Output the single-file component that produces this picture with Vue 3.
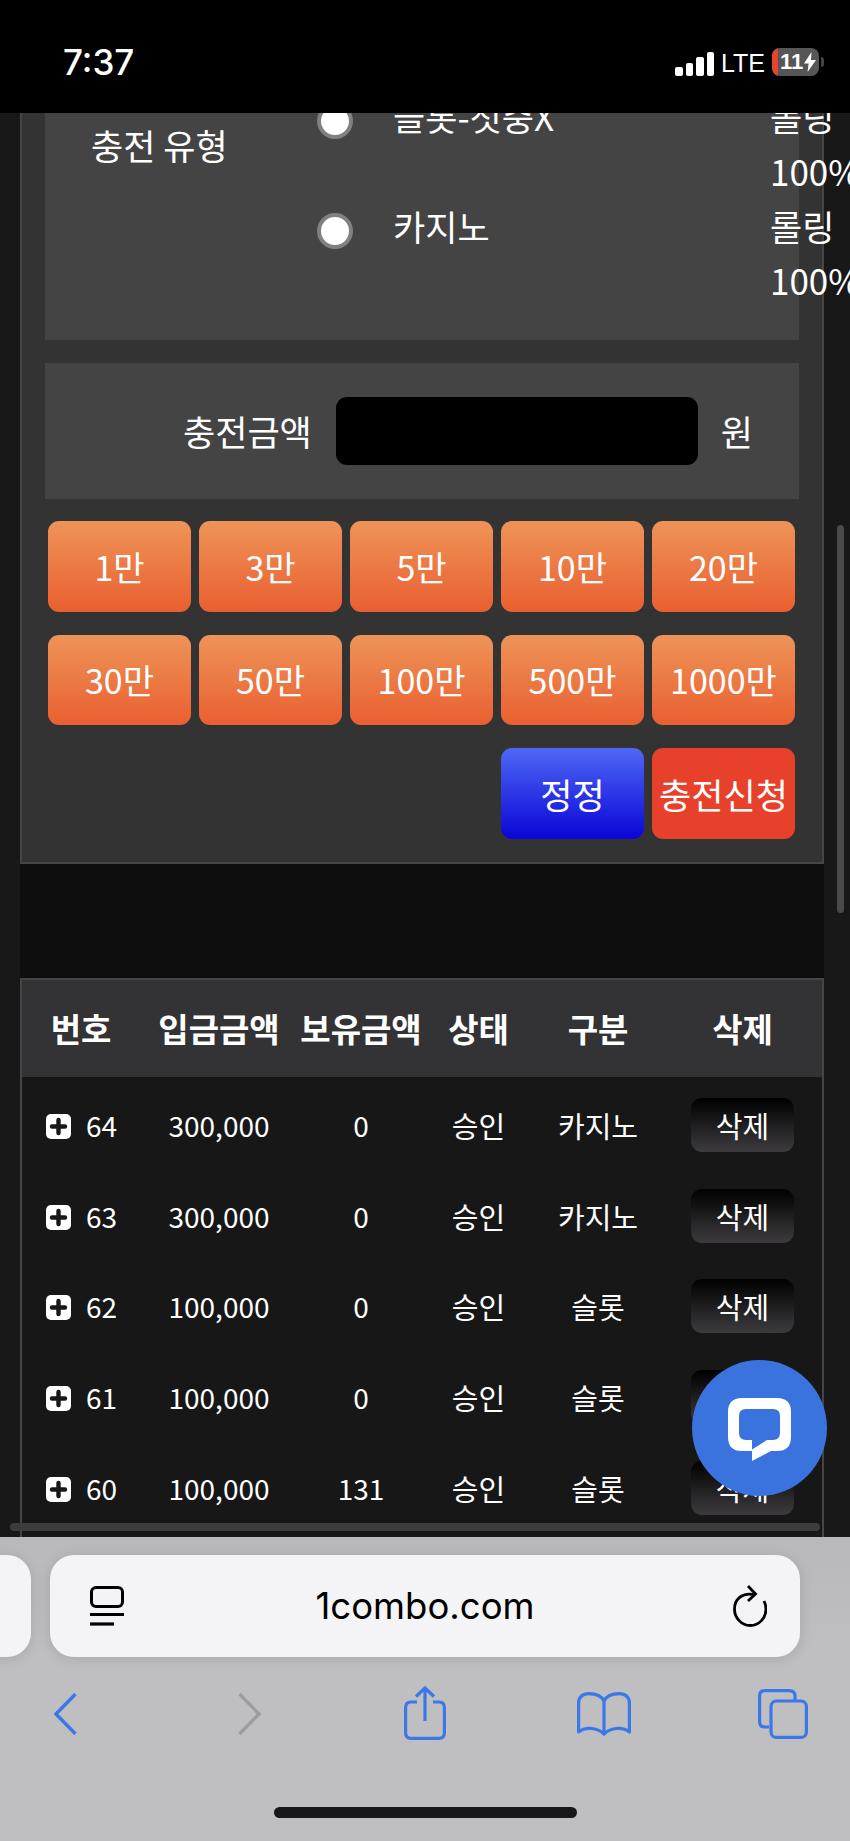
<script setup>
const amounts = ['1만','3만','5만','10만','20만','30만','50만','100만','500만','1000만']
const columns = ['번호','입금금액','보유금액','상태','구분','삭제']
const records = [
  { no: 64, amount: '300,000', held: '0', status: '승인', type: '카지노' },
  { no: 63, amount: '300,000', held: '0', status: '승인', type: '카지노' },
  { no: 62, amount: '100,000', held: '0', status: '승인', type: '슬롯' },
  { no: 61, amount: '100,000', held: '0', status: '승인', type: '슬롯' },
  { no: 60, amount: '100,000', held: '131', status: '승인', type: '슬롯' }
]
const options = [
  { name: '슬롯-첫충X', roll: '롤링', pct: '100%' },
  { name: '카지노', roll: '롤링', pct: '100%' }
]
</script>

<template>
  <div class="phone">
    <header class="status">
      <span class="time">7:37</span>
      <div class="status-right">
        <div class="signal"><i class="b1"></i><i class="b2"></i><i class="b3"></i><i class="b4"></i></div>
        <span class="lte">LTE</span>
        <div class="battery">
          <span class="low"></span>
          <span class="level">11</span>
          <svg class="bolt" viewBox="0 0 12 20"><path d="M7.5 0 0 11.5h4.6L3.6 20 12 8H7z" fill="#fff"/></svg>
        </div>
        <span class="nub"></span>
      </div>
    </header>

    <main class="viewport">
      <div class="scroller">
        <section class="panel">
          <div class="box type-box">
            <div class="type-label">충전 유형</div>
            <div class="options">
              <div v-for="o in options" :key="o.name" class="option">
                <span class="radio"></span>
                <span class="opt-name">{{ o.name }}</span>
                <span class="opt-roll">{{ o.roll }}<br />{{ o.pct }}</span>
              </div>
            </div>
          </div>

          <div class="box amount-box">
            <span class="amount-label">충전금액</span>
            <div class="amount-input"></div>
            <span class="amount-unit">원</span>
          </div>

          <div class="btn-grid">
            <button v-for="a in amounts" :key="a" class="btn orange">{{ a }}</button>
            <button class="btn blue">정정</button>
            <button class="btn red">충전신청</button>
          </div>
        </section>

        <div class="gap"></div>

        <section class="table">
          <div class="row head">
            <div v-for="c in columns" :key="c" class="cell">{{ c }}</div>
          </div>
          <div class="tbody">
            <div v-for="r in records" :key="r.no" class="row item">
              <div class="cell no">
                <svg class="plus" viewBox="0 0 25 25">
                  <rect width="25" height="25" rx="5" fill="#fff"/>
                  <path d="M12.5 6v13M6 12.5h13" stroke="#181818" stroke-width="4.4" stroke-linecap="round"/>
                </svg>
                <span>{{ r.no }}</span>
              </div>
              <div class="cell">{{ r.amount }}</div>
              <div class="cell">{{ r.held }}</div>
              <div class="cell ko">{{ r.status }}</div>
              <div class="cell ko">{{ r.type }}</div>
              <div class="cell"><button class="del">삭제</button></div>
            </div>
          </div>
        </section>
      </div>

      <div class="vbar"></div>
      <div class="hbar"></div>
      <button class="chat" aria-label="chat">
        <svg viewBox="0 0 64 64">
          <path fill="#fff" fill-rule="evenodd" d="M14 0H49Q63 0 63 14V39Q63 53 49 53H43L24 63V53H14Q0 53 0 39V14Q0 0 14 0ZM18 11Q11 11 11 18V35Q11 42 18 42H24V51.500L39 42H45Q52 42 52 35V18Q52 11 45 11Z"/>
        </svg>
      </button>
    </main>

    <footer class="browser">
      <div class="url-row">
        <div class="prev-pill"></div>
        <div class="url-pill">
          <svg class="reader" viewBox="0 0 34 40" fill="none" stroke="#000">
            <rect x="1.500" y="1.500" width="31" height="19" rx="4.500" stroke-width="3"/>
            <path d="M0 28.500H34" stroke-width="3.200"/>
            <path d="M0 38H24" stroke-width="3.200"/>
          </svg>
          <span class="url">1combo.com</span>
          <svg class="reload" viewBox="0 0 34 42" fill="none" stroke="#000" stroke-width="2.800">
            <path d="M20 9.500C9 7.500 1.500 14.500 1.500 24c0 9 7 16.500 15.800 16.500S33 33 33 24c0-3-.8-5.500-2-8"/>
            <path d="M15 1l7.500 8-7.500 7"/>
          </svg>
        </div>
      </div>
      <nav class="toolbar">
        <svg class="chev" viewBox="0 0 23 42" fill="none" stroke="#3b78e7" stroke-width="3.400"><path d="M21.500 1 2 21l19.500 20"/></svg>
        <svg class="chev fwd" viewBox="0 0 23 42" fill="none" stroke="#9d9d9f" stroke-width="3.400"><path d="M1.500 1 21 21 1.500 41"/></svg>
        <svg class="share" viewBox="0 0 42 54" fill="none" stroke="#3b78e7" stroke-width="3.200">
          <path d="M13 16H7Q1.600 16 1.600 21.500V46.500Q1.600 52.400 7 52.400H35Q40.400 52.400 40.400 46.500V21.500Q40.400 16 35 16H29"/>
          <path d="M21 35V2M12 10.500 21 2l9 8.500"/>
        </svg>
        <svg class="book" viewBox="0 0 54 44" fill="none" stroke="#3b78e7" stroke-width="3.200" stroke-linejoin="round">
          <path d="M27 9C24 3 18 1.600 12 1.600 6 1.600 1.600 5 1.600 11V40C8 35 20 35 27 42 34 35 46 35 52.400 40V11C52.400 5 48 1.600 42 1.600 36 1.600 30 3 27 9ZM27 9V42"/>
        </svg>
        <svg class="tabs" viewBox="0 0 50 50" fill="none" stroke="#3b78e7" stroke-width="3.200">
          <path d="M11 38H7Q1.600 38 1.600 32.500V7Q1.600 1.600 7 1.600H31Q37 1.600 37 7V12"/>
          <rect x="13" y="12" width="35.400" height="36.400" rx="5.500"/>
        </svg>
      </nav>
      <div class="home-indicator"></div>
    </footer>
  </div>
</template>

<style scoped>
.phone {
  width: 850px;
  height: 1841px;
  display: flex;
  flex-direction: column;
  overflow: hidden;
  background: #181818;
  color: #fff;
  font-family: "Noto Sans CJK KR", "Noto Sans", sans-serif;
}

/* status bar */
.status {
  height: 113px;
  flex: none;
  background: #000;
  display: flex;
  align-items: flex-start;
  justify-content: space-between;
  padding: 44px 26px 0 63px;
  box-sizing: border-box;
}
.time {
  font-family: Inter, sans-serif;
  font-weight: 500;
  font-size: 35px;
  line-height: 36px;
}
.status-right {
  display: flex;
  align-items: center;
  height: 32px;
  margin-top: 2px;
}
.signal {
  display: flex;
  align-items: flex-end;
  gap: 3px;
  height: 24px;
  margin-top: 4px;
}
.signal i { display: block; width: 7.500px; background: #fff; border-radius: 2px; }
.b1 { height: 9px; }
.b2 { height: 13px; }
.b3 { height: 19px; }
.b4 { height: 24px; }
.lte {
  font-family: "Liberation Sans", sans-serif;
  font-size: 25px;
  line-height: 30px;
  margin: 2px 7px 0 7px;
}
.battery {
  position: relative;
  width: 47px;
  height: 28px;
  border-radius: 8px;
  background: #565656;
  overflow: hidden;
  display: flex;
  align-items: center;
  padding-left: 8px;
  box-sizing: border-box;
}
.low { position: absolute; left: 0; top: 0; bottom: 0; width: 6px; background: #e5442f; }
.level {
  font-family: "Liberation Sans", sans-serif;
  font-weight: 700;
  font-size: 22px;
  line-height: 28px;
}
.bolt { width: 12px; height: 20px; margin-left: 1px; }
.nub { width: 3px; height: 10px; margin-left: 2px; background: #444; border-radius: 0 3px 3px 0; }

/* viewport */
.viewport {
  position: relative;
  flex: 1;
  overflow: hidden;
  background: #181818;
}
.scroller {
  margin-top: -23px;
}
.panel {
  margin: 0 26px 0 20px;
  padding: 0 23px 23px;
  background: #333334;
  border: 2px solid #454545;
  border-top: 0;
}
.box { background: #444; }
.type-box {
  display: flex;
  height: 250px;
  margin-bottom: 23px;
}
.type-label {
  width: 272px;
  height: 110px;
  flex: none;
  padding-left: 46px;
  box-sizing: border-box;
  font-size: 35px;
  line-height: 110px;
  white-space: nowrap;
}
.option {
  display: flex;
  height: 109.500px;
  font-size: 35px;
  line-height: 54.500px;
  white-space: nowrap;
}
.radio {
  flex: none;
  width: 36px;
  height: 36px;
  box-sizing: border-box;
  margin: 13px 40px 0 0;
  border-radius: 50%;
  background: #fff;
  border: 4px solid #808080;
}
.opt-name { width: 378px; flex: none; margin-top: -1px; }
.opt-roll { margin-top: -1px; margin-left: -1px; }
.amount-box {
  height: 136px;
  display: flex;
  align-items: center;
  padding-left: 138px;
  font-size: 35px;
}
.amount-input {
  width: 362px;
  height: 68px;
  margin: 0 23px 0 24px;
  background: #000;
  border-radius: 11px;
}
.amount-label, .amount-unit { line-height: 50px; }
.btn-grid {
  display: grid;
  grid-template-columns: repeat(5, 143px);
  gap: 23px 8px;
  margin: 22px 3px 0;
}
.btn {
  height: 90.500px;
  border: 0;
  padding: 0;
  border-radius: 11px;
  color: #fff;
  font-family: inherit;
  font-size: 34px;
  white-space: nowrap;
}
.orange { background: linear-gradient(#ee9458, #e95f30); }
.blue { grid-column: 4; background: linear-gradient(#4f68f6, #0a05d6); font-size: 35px; }
.red { background: #e8412b; font-size: 35px; }

.gap {
  height: 114px;
  margin: 0 26px 0 20px;
  background: #0e0e0e;
}

/* table */
.table {
  margin: 0 26px 0 20px;
  border: 2px solid #454545;
  border-bottom: 0;
  background: #171717;
  height: 600px;
}
.row {
  display: grid;
  grid-template-columns: 118px 158px 126px 109px 130px 159px;
  align-items: center;
  text-align: center;
}
.head {
  height: 97px;
  background: #333234;
  font-size: 33px;
  font-weight: 700;
}
.tbody { padding-top: 3px; }
.item {
  height: 90.700px;
  font-size: 28px;
}
.cell { white-space: nowrap; line-height: 40px; }
.ko { font-size: 29px; }
.no {
  display: flex;
  align-items: center;
  gap: 15px;
  padding-left: 24px;
}
.plus { width: 25px; height: 25px; flex: none; margin-top: 3px; }
.del {
  width: 103px;
  height: 54px;
  border: 0;
  padding: 0;
  border-radius: 11px;
  color: #fff;
  font-family: inherit;
  font-size: 29px;
  background: linear-gradient(#000, #3d3b3e);
  vertical-align: middle;
}

/* overlays */
.vbar {
  position: absolute;
  left: 837px;
  top: 412px;
  width: 7px;
  height: 388px;
  border-radius: 4px;
  background: #4a4a4a;
}
.hbar {
  position: absolute;
  left: 10px;
  top: 1410px;
  width: 810px;
  height: 8px;
  border-radius: 4px;
  background: #3c3c3c;
}
.chat {
  position: absolute;
  left: 692px;
  top: 1247px;
  width: 135px;
  height: 136px;
  border: 0;
  padding: 0;
  border-radius: 50%;
  background: #3b73de;
  display: flex;
  align-items: center;
  justify-content: center;
}
.chat svg { width: 64px; height: 64px; margin: 4px 0 0 1px; }

/* browser chrome */
.browser {
  height: 304px;
  flex: none;
  box-sizing: border-box;
  padding-top: 18px;
  background: linear-gradient(#b9b8ba, #bfbec0 40%);
  position: relative;
}
.url-row {
  display: flex;
  gap: 19px;
  margin-left: -60px;
}
.prev-pill {
  width: 91px;
  height: 102px;
  border-radius: 24px;
  background: #f4f3f5;
  box-shadow: 0 2px 14px rgba(0, 0, 0, 0.12);
}
.url-pill {
  width: 750px;
  height: 102px;
  border-radius: 24px;
  background: #f4f3f5;
  box-shadow: 0 2px 14px rgba(0, 0, 0, 0.12);
  display: flex;
  align-items: center;
  justify-content: space-between;
  padding: 0 33px 0 40px;
  box-sizing: border-box;
}
.reader { width: 34px; height: 40px; flex: none; }
.url {
  font-family: Inter, sans-serif;
  font-size: 36.500px;
  line-height: 50px;
  color: #000;
  margin-right: 7px;
}
.reload { width: 34px; height: 42px; flex: none; }
.toolbar {
  position: relative;
  height: 82px;
  margin-top: 25px;
  display: flex;
  align-items: flex-start;
}
.chev { width: 23px; height: 42px; margin: 11px 0 0 54px; flex: none; }
.fwd { margin-left: 161px; }
.share { width: 42px; height: 54px; margin: 4px 0 0 143px; flex: none; }
.book { width: 54px; height: 44px; margin: 10px 0 0 131px; flex: none; }
.tabs { width: 50px; height: 50px; margin: 7px 0 0 127px; flex: none; }
.home-indicator {
  width: 303px;
  height: 11px;
  margin: 43px auto 0;
  border-radius: 6px;
  background: #18181a;
}
</style>
